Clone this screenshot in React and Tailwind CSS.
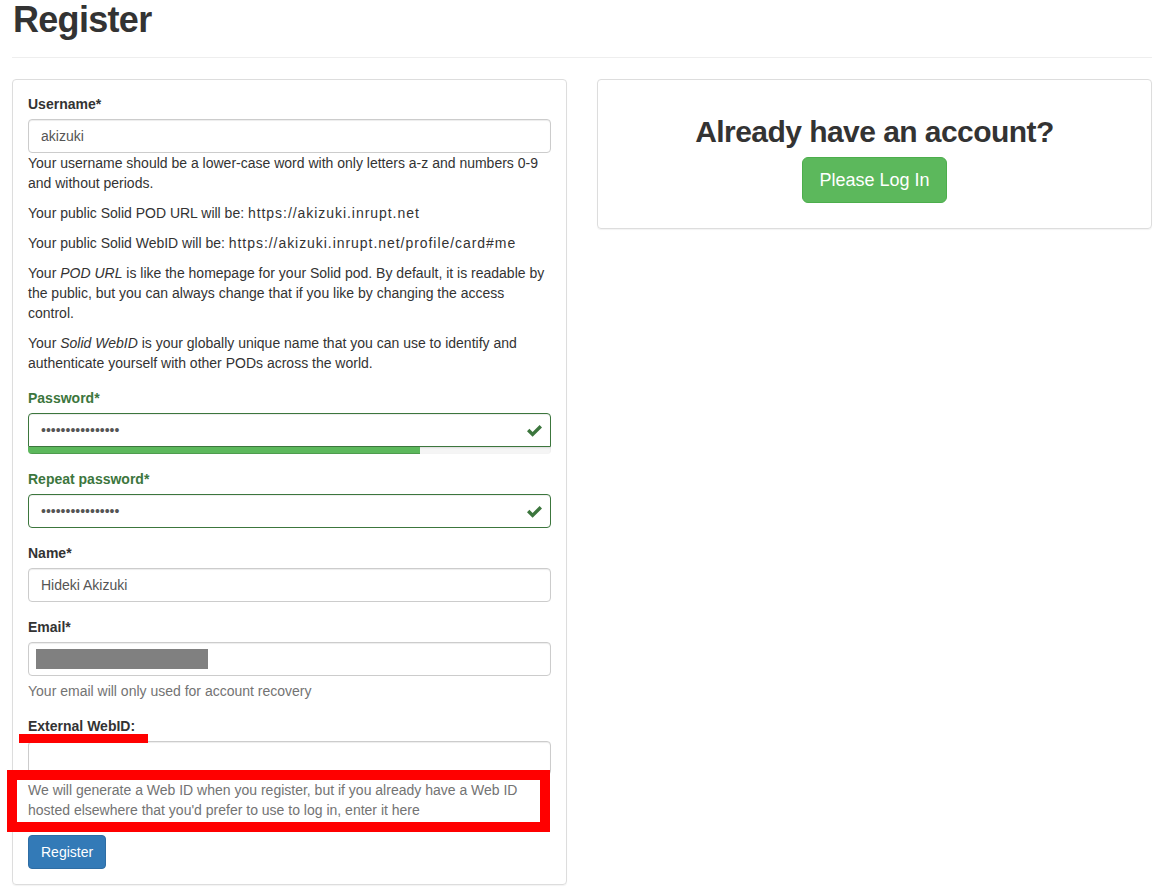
import React from "react";

function Check() {
  return (
    <svg
      className="absolute right-[9px] top-[11px]"
      width="15"
      height="13"
      viewBox="0 0 15 13"
    >
      <polygon points="0,7.2 2.4,4.8 5.6,8 12.6,1 15,3.4 5.6,12.8" fill="#3c763d" />
    </svg>
  );
}

const inputCls =
  "block w-full h-[34px] px-[12px] py-[6px] text-[14px] leading-[20px] text-[#555] bg-white border border-[#ccc] rounded-[4px] shadow-[inset_0_1px_1px_rgba(0,0,0,0.075)] outline-none";

const url = "tracking-[0.95px]";

export default function App() {
  return (
    <div className="relative w-[1169px] h-[895px] overflow-hidden bg-white text-[#333] text-[14px] leading-[20px] font-['Liberation_Sans',Arial,sans-serif]">
      <div className="px-[12px] w-[1164px]">
        <h1 className="text-[36px] leading-[40px] font-bold text-[#333] pl-px tracking-[-0.7px]">Register</h1>
        <div className="mt-[17px] border-t border-[#eee]" />
        <div className="mt-[21px] flex gap-[30px] items-start">
          {/* Left panel */}
          <div className="w-[555px] border border-[#ddd] rounded-[4px] px-[15px] pt-[14px] pb-[15px] shadow-[0_1px_1px_rgba(0,0,0,0.05)]">
            <div className="mb-[15px]">
              <label className="block font-bold mb-[5px]">Username*</label>
              <input className={inputCls} readOnly value="akizuki" />
              <p className="mb-[10px]">
                Your username should be a lower-case word with only letters a-z and numbers 0-9 and without periods.
              </p>
              <p className="mb-[10px]">
                Your public Solid POD URL will be: <span className={url}>https://akizuki.inrupt.net</span>
              </p>
              <p className="mb-[10px]">
                Your public Solid WebID will be:{" "}
                <span className={url}>https://akizuki.inrupt.net/profile/card#me</span>
              </p>
              <p className="mb-[10px]">
                Your <em>POD URL</em> is like the homepage for your Solid pod. By default, it is readable by the
                public, but you can always change that if you like by changing the access control.
              </p>
              <p>
                Your <em>Solid WebID</em> is your globally unique name that you can use to identify and
                authenticate yourself with other PODs across the world.
              </p>
            </div>

            <div className="mb-[15px]">
              <label className="block font-bold mb-[5px] text-[#3c763d]">Password*</label>
              <div className="relative">
                <input
                  type="password"
                  className={inputCls + " !border-[#3c763d] rounded-b-none"}
                  readOnly
                  value="aaaaaaaaaaaaaaaa"
                />
                <Check />
              </div>
              <div className="h-[7px] bg-[#f5f5f5] rounded-b-[4px] overflow-hidden shadow-[inset_0_1px_2px_rgba(0,0,0,0.1)]">
                <div className="h-full w-[75%] bg-[#5cb85c] shadow-[inset_0_-1px_0_rgba(0,0,0,0.15)]" />
              </div>
            </div>

            <div className="mb-[15px]">
              <label className="block font-bold mb-[5px] text-[#3c763d]">Repeat password*</label>
              <div className="relative">
                <input
                  type="password"
                  className={inputCls + " !border-[#3c763d]"}
                  readOnly
                  value="aaaaaaaaaaaaaaaa"
                />
                <Check />
              </div>
            </div>

            <div className="mb-[15px]">
              <label className="block font-bold mb-[5px]">Name*</label>
              <input className={inputCls} readOnly value="Hideki Akizuki" />
            </div>

            <div className="mb-[15px]">
              <label className="block font-bold mb-[5px]">Email*</label>
              <div className={inputCls + " !px-[7px] flex items-center"}>
                <div className="w-[172px] h-[20px] bg-[#808080]" />
              </div>
              <p className="mt-[5px] text-[#737373]">Your email will only used for account recovery</p>
            </div>

            <div className="mb-[15px]">
              <label className="block font-bold mb-[5px]">External WebID:</label>
              <input className={inputCls} readOnly value="" />
              <p className="mt-[5px] text-[#737373]">
                We will generate a Web ID when you register, but if you already have a Web ID hosted elsewhere
                that you'd prefer to use to log in, enter it here
              </p>
            </div>

            <button className="h-[34px] px-[12px] text-[14px] leading-[20px] text-white bg-[#337ab7] border border-[#2e6da4] rounded-[4px]">
              Register
            </button>
          </div>

          {/* Right panel */}
          <div className="w-[555px] border border-[#ddd] rounded-[4px] px-[15px] pt-[15px] pb-[15px] text-center shadow-[0_1px_1px_rgba(0,0,0,0.05)]">
            <h2 className="mt-[20px] mb-[9px] text-[30px] leading-[33px] font-bold text-[#333] tracking-[-0.55px]">
              Already have an account?
            </h2>
            <p className="mb-[10px]">
              <button className="h-[46px] px-[16px] text-[18px] leading-[24px] text-white bg-[#5cb85c] border border-[#4cae4c] rounded-[6px]">
                Please Log In
              </button>
            </p>
          </div>
        </div>
      </div>

      {/* Red annotations */}
      <div className="absolute left-[19px] top-[734px] w-[129px] h-[9px] bg-[#ff0000]" />
      <div className="absolute left-[7px] top-[770px] w-[543px] h-[62px] border-[10px] border-[#ff0000]" />
    </div>
  );
}
